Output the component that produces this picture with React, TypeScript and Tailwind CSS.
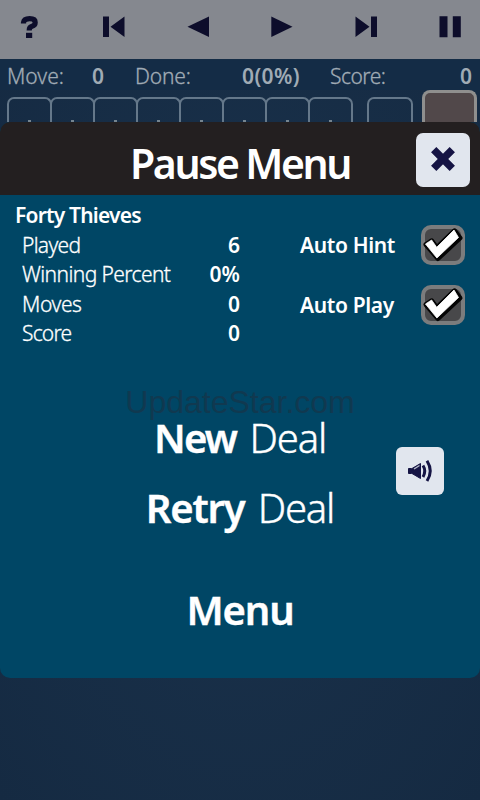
import React, { useState } from "react";

const STATS = [
  { label: "Played", value: "6", tracking: "tracking-[-0.7px]" },
  { label: "Winning Percent", value: "0%", tracking: "tracking-[-0.6px]" },
  { label: "Moves", value: "0", tracking: "tracking-[-0.4px]" },
  { label: "Score", value: "0", tracking: "tracking-[-0.8px]" },
];

function Toolbar() {
  return (
    <div className="h-[59px] bg-[#85888f] flex items-center justify-between pl-[20px] pr-[19px] pb-[5px] text-[#0d0d2b]">
      <button aria-label="Help">
        <svg width="20" height="24" viewBox="0 0 20 24" fill="none">
          <path d="M3.5 8.4V7.5Q4 3.6 9.6 3.6Q15.2 3.6 15.2 7.4Q15.2 10.2 12 11.2Q9.2 12 9.2 15.4" stroke="currentColor" strokeWidth="5.2" />
          <path d="M6 17.8h6.2v5.2H6z" fill="currentColor" />
        </svg>
      </button>
      <button aria-label="First">
        <svg width="22" height="22" viewBox="0 0 22 22" fill="currentColor" className="ml-px">
          <path d="M0 .5h6v20.5H0zM21.5 .5v20.5L7.5 10.7z" />
        </svg>
      </button>
      <button aria-label="Back">
        <svg width="22" height="22" viewBox="0 0 22 22" fill="currentColor">
          <path d="M22 .5v20.5L.5 10.7z" />
        </svg>
      </button>
      <button aria-label="Forward">
        <svg width="22" height="22" viewBox="0 0 22 22" fill="currentColor">
          <path d="M.3 .5v20.5L21.5 10.7z" />
        </svg>
      </button>
      <button aria-label="Last">
        <svg width="22" height="22" viewBox="0 0 22 22" fill="currentColor">
          <path d="M.5 .5v20.5L14.5 10.7zM16 .5h6v20.5h-6z" />
        </svg>
      </button>
      <button aria-label="Pause">
        <svg width="22" height="22" viewBox="0 0 22 22" fill="currentColor">
          <path d="M.5 .3h8v21h-8zM13.8 .3h8v21h-8z" />
        </svg>
      </button>
    </div>
  );
}

function Board() {
  return (
    <div className="h-8 flex items-end pl-[7px]">
      {[0, 1, 2, 3, 4, 5, 6, 7].map((i) => (
        <div
          key={i}
          className="w-[45px] -mr-[2px] h-[25px] rounded-t-[7px] border-2 border-b-0 border-[#65788a] flex items-end justify-center"
        >
          <span className="w-[3px] h-[2px] bg-[#75848f]" />
        </div>
      ))}
      <div className="ml-[16px] w-[46px] h-[25px] rounded-t-[7px] border-2 border-b-0 border-[#65788a]" />
      <div className="ml-[9px] w-[55px] h-8 rounded-t-[8px] border-[3px] border-b-0 border-[#8f8f8e] bg-[#51484a]" />
    </div>
  );
}

function CheckBox({ label, checked, onToggle }: { label: string; checked: boolean; onToggle: () => void }) {
  return (
    <div className="flex h-[60px] items-center justify-between">
      <span className="pt-[1px] font-semibold text-[21px] tracking-[-0.35px] whitespace-nowrap">{label}</span>
      <button onClick={onToggle} aria-label={label}>
        <svg width="44" height="40" viewBox="0 0 44 40">
          <rect x="2" y="2" width="40" height="36" rx="8" fill="#48484a" stroke="#7b7c7d" strokeWidth="4" />
          {checked && (
            <g strokeLinejoin="round">
              <path d="M5 19.5L10.6 15.8L15.7 22.8L33.5 5.8L39 13L17 33.5Z" fill="#050505" stroke="#050505" strokeWidth="5" />
              <path d="M4.5 19L10.6 15L15.7 22.3L33 5L37.5 12.5L15.9 33Z" fill="#fff" stroke="#fff" strokeWidth="0.8" />
            </g>
          )}
        </svg>
      </button>
    </div>
  );
}

export default function App() {
  const [autoHint, setAutoHint] = useState(true);
  const [autoPlay, setAutoPlay] = useState(true);

  return (
    <div className="relative w-[480px] h-[800px] overflow-hidden bg-[radial-gradient(ellipse_at_center,#182f48_40%,#152a42_100%)] font-['Noto_Sans','Open_Sans',sans-serif] text-white">
      <Toolbar />

      {/* Score line */}
      <div className="h-[31px] bg-[#142c46] flex items-center pl-[7px] pr-[8px] pt-[4px] text-[21px] text-[#a0abb5] font-light">
        <span className="w-[85px] tracking-[0px] [-webkit-text-stroke:0.3px]">Move:</span>
        <span className="w-[43px] font-semibold">0</span>
        <span className="w-[107px] tracking-[-0.2px] [-webkit-text-stroke:0.3px]">Done:</span>
        <span className="w-[88px] font-semibold tracking-[0.4px]">0(0%)</span>
        <span className="tracking-[-0.5px] [-webkit-text-stroke:0.3px]">Score:</span>
        <span className="ml-auto font-semibold">0</span>
      </div>
      <Board />

      {/* Pause dialog */}
      <div className="absolute left-0 top-[122px] w-full h-[556px] rounded-[10px] overflow-hidden bg-[#004665] flex flex-col">
        <div className="h-[73px] shrink-0 bg-[#231f20] flex items-center justify-end pr-[10px]">
          <h1 className="w-[222px] mr-[64px] pt-[10px] text-[41px] leading-none font-semibold tracking-[-2.4px] [word-spacing:-0.5px] whitespace-nowrap">
            Pause Menu
          </h1>
          <button className="w-[54px] h-[54px] mt-[3px] rounded-[7px] bg-[#e1e6ee] flex items-center justify-center pb-[2px]" aria-label="Close">
            <svg width="24" height="24" viewBox="0 0 24 24" stroke="#151444" strokeWidth="7.5">
              <path d="M2.7 2.7L21.3 21.3M21.3 2.7L2.7 21.3" />
            </svg>
          </button>
        </div>

        <div className="flex h-[160px] shrink-0 pl-[15px] pr-[15px]">
          <div className="w-[225px] pt-[6px] text-[21px]">
            <h2 className="h-[29px] leading-[29px] font-semibold tracking-[-0.8px]">Forty Thieves</h2>
            {STATS.map((stat) => (
              <div key={stat.label} className="flex h-[29.3px] leading-[30.5px] justify-between pl-[7px]">
                <span className={`font-light whitespace-nowrap [-webkit-text-stroke:0.3px] ${stat.tracking}`}>{stat.label}</span>
                <span className="font-semibold">{stat.value}</span>
              </div>
            ))}
          </div>
          <div className="ml-[60px] flex-1 pt-[20px]">
            <CheckBox label="Auto Hint" checked={autoHint} onToggle={() => setAutoHint(!autoHint)} />
            <CheckBox label="Auto Play" checked={autoPlay} onToggle={() => setAutoPlay(!autoPlay)} />
          </div>
        </div>

        <div className="h-[48px] shrink-0 pt-[29px] text-center font-['Liberation_Sans',sans-serif] text-[32px] leading-[36px] text-[#103950]">
          UpdateStar.com
        </div>
        <div className="relative flex flex-col items-center text-[40px] leading-[54px] font-light whitespace-nowrap">
          <button className="h-[70px] tracking-[-1.2px] [word-spacing:4px] [-webkit-text-stroke:0.4px]">
            <b className="font-semibold tracking-[-1.7px]">New</b> Deal
          </button>
          <button className="h-[70px] tracking-[-1.2px] [word-spacing:4px] [-webkit-text-stroke:0.4px]">
            <b className="font-semibold tracking-[-1.2px]">Retry</b> Deal
          </button>
          <button className="mt-[32px] h-[70px] font-semibold tracking-[-1.1px] [-webkit-text-stroke:0.4px]">Menu</button>
        </div>

        <button className="absolute left-[396px] top-[325px] w-[48px] h-[48px] rounded-[6px] bg-[#e1e6ee] flex items-center justify-center" aria-label="Sound">
          <svg width="26" height="24" viewBox="0 0 26 24" fill="none" stroke="#151444">
            <path d="M1.5 9.5h3v5h-3z" fill="#151444" />
            <path d="M5 9.5L13.5 4.5v15L5 14.5z" fill="#151444" />
            <path d="M7 10L12.5 6.5" stroke="#b7bdcc" strokeWidth="1.4" />
            <path d="M16 6.5Q19.5 12 16 18" strokeWidth="3" />
            <path d="M20 1.7Q26.5 12 20 22" strokeWidth="3" />
          </svg>
        </button>
      </div>
    </div>
  );
}
